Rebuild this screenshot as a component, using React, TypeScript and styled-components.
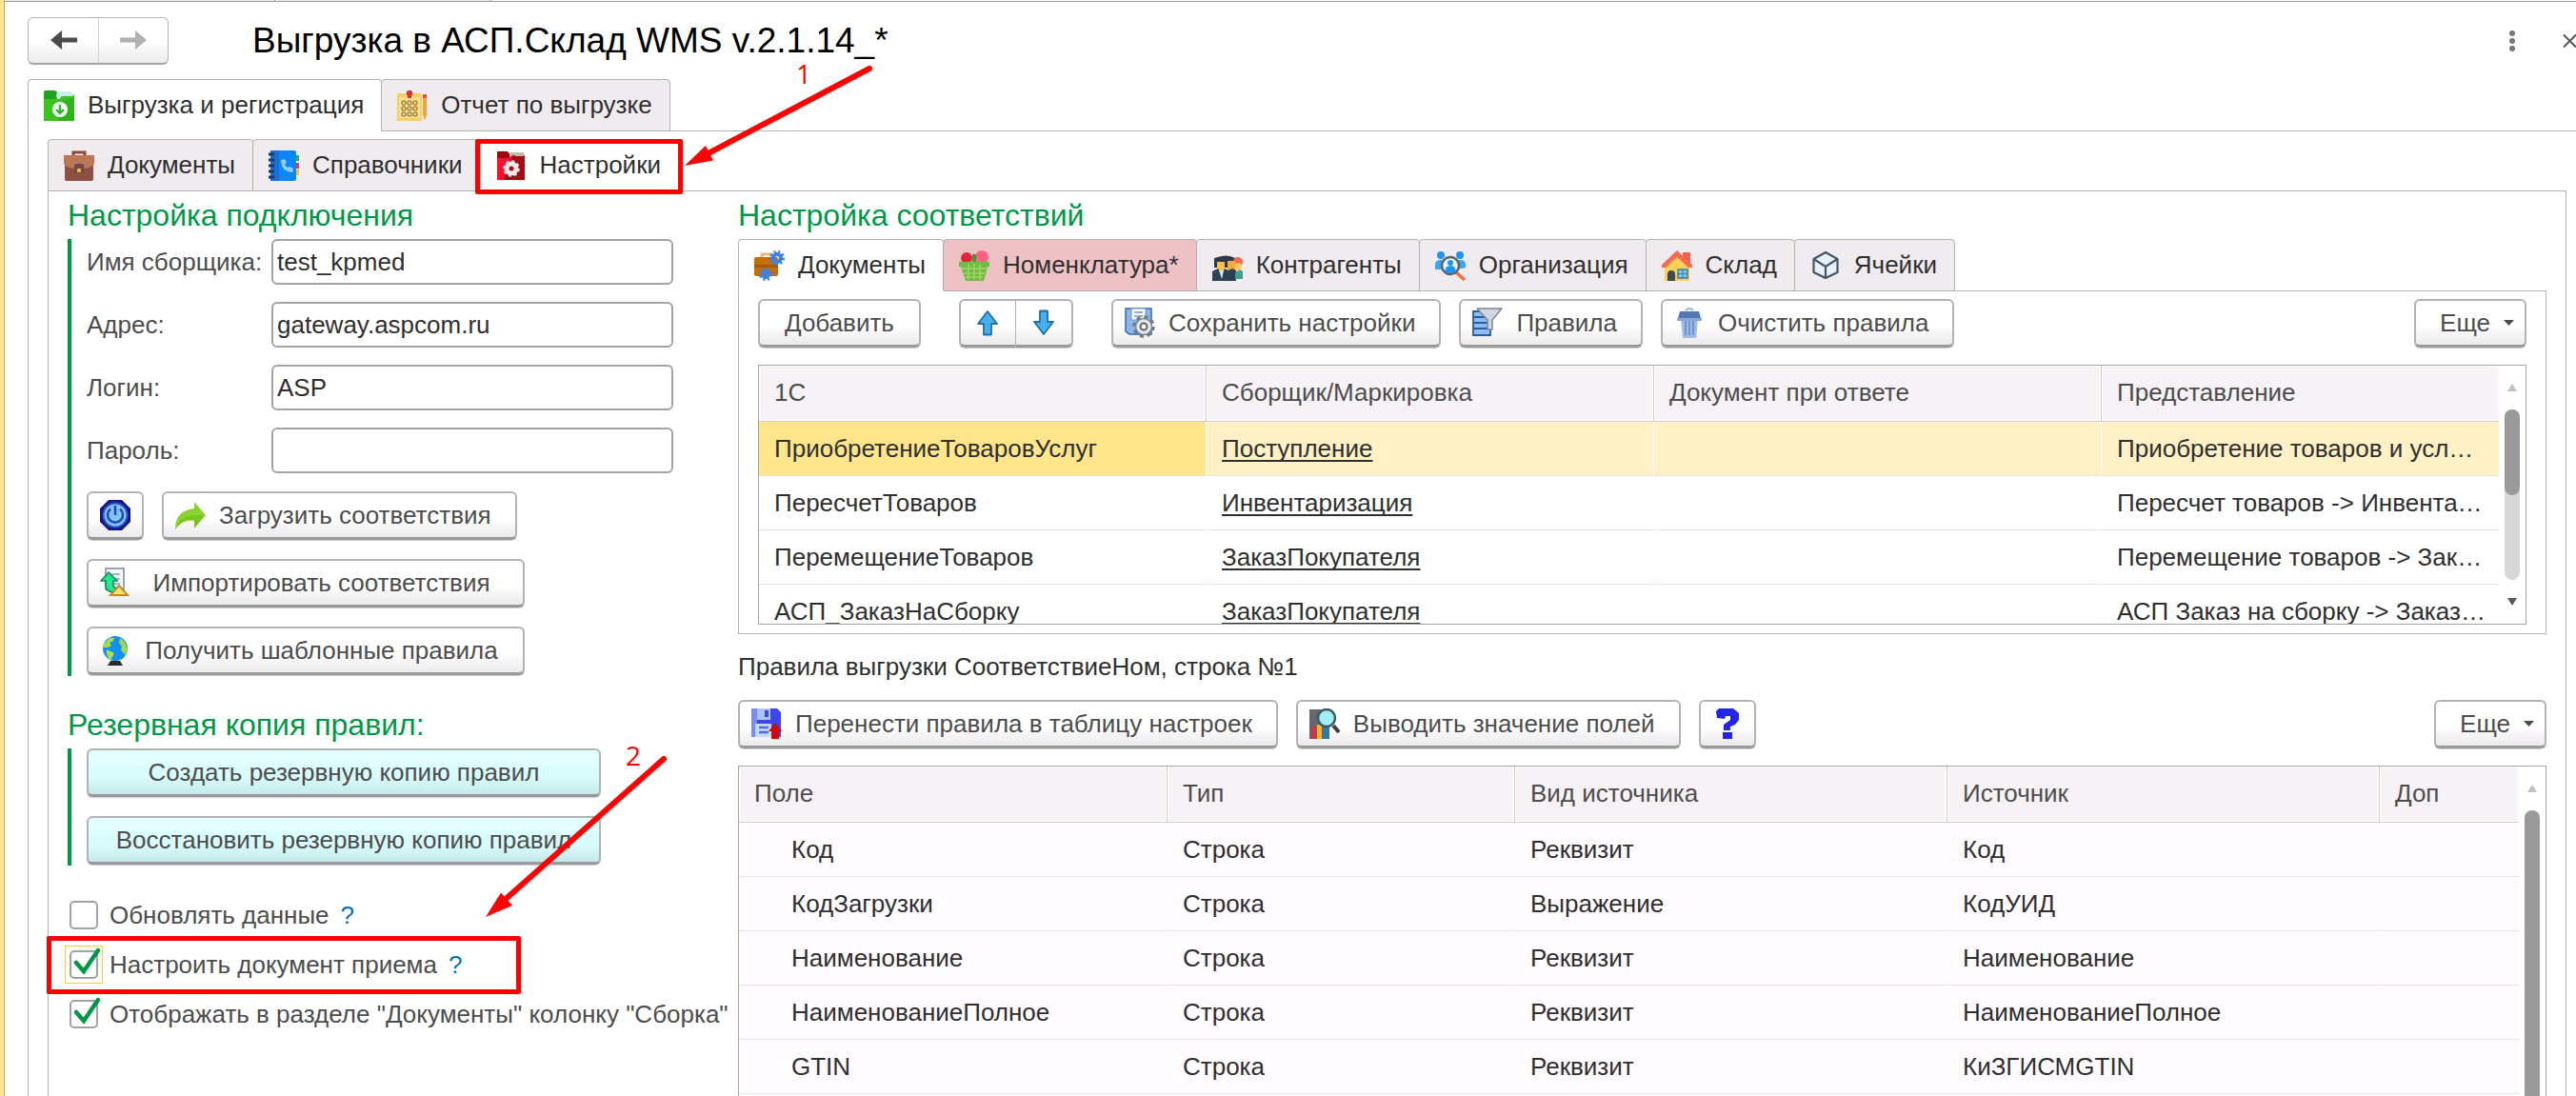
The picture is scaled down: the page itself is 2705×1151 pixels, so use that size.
import React from "react";
import styled, { createGlobalStyle, css } from "styled-components";

const GlobalStyle = createGlobalStyle`
  *, *::before, *::after { box-sizing: border-box; }
  body {
    margin: 0;
    background: #fff;
    overflow: hidden;
    font-family: "Liberation Sans", Arial, sans-serif;
    font-size: 26px;
    color: #2f2f2f;
  }
  button, input { font: inherit; }
`;

const line = "#b3b3b3";
const green = "#009846";

/* ---------- window ---------- */

const Window = styled.div`
  position: relative;
  display: flex;
  height: 100vh;
  overflow: hidden;
`;

const SideStripe = styled.div`
  flex: 0 0 5px;
  background: #ffe695;
  border-right: 1px solid #c4ad6c;
`;

const Workspace = styled.div`
  flex: 1;
  min-width: 0;
  display: flex;
  flex-direction: column;
`;

const OpenTabs = styled.div`
  display: flex;
  height: 2px;
  border-bottom: 1px solid #a09c9f;
`;

const OpenTab = styled.div<{ $width: number }>`
  width: ${(p) => p.$width}px;
  background: #f0ebee;
  border-right: 1px solid #a09c9f;
`;

const Header = styled.header`
  flex: none;
  display: flex;
  align-items: center;
  height: 81px;
  padding-left: 24px;
`;

const History = styled.div`
  display: flex;
  height: 50px;
  border: 1px solid ${line};
  border-bottom: 2px solid #a6a3a6;
  border-radius: 6px;
  background: linear-gradient(#fff 50%, #f6f4f6 75%, #ececec);
`;

const HistoryButton = styled.button`
  width: 73px;
  display: flex;
  align-items: center;
  justify-content: center;
  padding: 0;
  border: 0;
  background: none;
  color: #4d4d4d;
  & + & { border-left: 1px solid #d2d2d2; }
  &:disabled { color: #b0b0b0; }
`;

const Title = styled.h1`
  flex: 1;
  margin: 0 0 0 88px;
  font-size: 37px;
  font-weight: 400;
  color: #000;
  white-space: nowrap;
`;

const WindowButton = styled.button`
  display: flex;
  padding: 0;
  margin-left: 50px;
  border: 0;
  background: none;
  color: #555;
`;

/* ---------- tabs ---------- */

const TabList = styled.div`
  flex: none;
  display: flex;
`;

const Tab = styled.button<{ $active?: boolean; $tone?: string }>`
  position: relative;
  display: flex;
  align-items: center;
  gap: 14px;
  height: 55px;
  margin: 0 0 -1px;
  padding: 0 18px 0 16px;
  border: 1px solid ${line};
  border-radius: 4px 4px 0 0;
  background: ${(p) => p.$tone || "#f0ebee"};
  color: #2f2f2f;
  white-space: nowrap;
  & + & { margin-left: -1px; }
  ${(p) =>
    p.$active &&
    css`
      background: #fff;
      border-bottom-color: #fff;
      z-index: 1;
    `}
`;

const MainTabs = styled.div`
  flex: 1;
  min-height: 0;
  display: flex;
  flex-direction: column;
  padding-left: 24px;
`;

const MainPanel = styled.div`
  flex: 1;
  min-height: 0;
  display: flex;
  flex-direction: column;
  padding: 8px 10px 0 20px;
  border: 1px solid ${line};
  border-width: 1px 0 0 1px;
`;

const SettingsPanel = styled.div`
  flex: 1;
  min-height: 0;
  display: grid;
  grid-template-columns: 684px minmax(0, 1fr);
  grid-template-rows: minmax(0, 1fr);
  gap: 20px;
  padding: 0 20px;
  border: 1px solid ${line};
  border-bottom: 0;
`;

const MappingPanel = styled.div`
  flex: none;
  padding: 8px 20px 9px;
  border: 1px solid ${line};
`;

/* ---------- common parts ---------- */

const Column = styled.div`
  display: flex;
  flex-direction: column;
  min-width: 0;
  min-height: 0;
`;

const Heading = styled.h2<{ $spaced?: boolean }>`
  flex: none;
  margin: ${(p) => (p.$spaced ? "26px" : 0)} 0 0;
  font-size: 32px;
  line-height: 50px;
  font-weight: 400;
  color: ${green};
`;

const Group = styled.div`
  display: flex;
  flex-direction: column;
  align-items: flex-start;
  gap: 19px;
  padding-left: 16px;
  border-left: 4px solid ${green};
`;

const Fields = styled.div`
  display: grid;
  grid-template-columns: 194px 422px;
  row-gap: 18px;
  align-items: center;
`;

const FieldLabel = styled.label`
  color: #4d4d4d;
  white-space: nowrap;
`;

const TextField = styled.input`
  height: 48px;
  width: 100%;
  padding: 0 4px;
  border: 2px solid #a3a3a3;
  border-radius: 6px;
  background: #fff;
  color: #2f2f2f;
  outline: 0;
`;

const Row = styled.div`
  display: flex;
  gap: 19px;
`;

const Button = styled.button<{ $kind?: "icon" | "more"; $width?: number; $accent?: boolean }>`
  flex: none;
  display: flex;
  align-items: center;
  justify-content: center;
  gap: 14px;
  height: 51px;
  width: ${(p) => (p.$kind === "icon" ? "60px" : p.$width ? `${p.$width}px` : "auto")};
  padding: ${(p) => (p.$kind === "icon" ? "0" : p.$kind === "more" ? "0 11px 0 25px" : "0 26px")};
  border: 2px solid ${line};
  border-bottom: 3px solid #9b989b;
  border-radius: 6px;
  box-shadow: 0 1px 0 #d0ced0;
  background: ${(p) =>
    p.$accent
      ? "linear-gradient(#e3ffff 25%, #d9fdff 40%, #d9fbfc 60%, #c6eaea)"
      : "linear-gradient(#fff 60%, #f7f4f7 75%, #ebebeb)"};
  color: #4d4d4d;
  white-space: nowrap;
  margin-bottom: 1px;
`;

const IconTextButton = styled(Button)`
  padding: 0 25px 0 12px;
`;

const ButtonText = styled.span`
  flex: 1;
  text-align: center;
`;

const Toolbar = styled.div`
  flex: none;
  display: flex;
  gap: 19px;
  margin-bottom: 17px;
`;

const Spacer = styled.div`
  flex: 1;
`;

const MoveButtons = styled.div`
  display: flex;
  margin: 0 21px;
  button + button { border-left: 0; border-radius: 0 6px 6px 0; }
  button:first-child { border-radius: 6px 0 0 6px; border-right-width: 1px; }
`;

const RulesCaption = styled.div`
  flex: none;
  line-height: 69px;
`;

/* ---------- check boxes ---------- */

const Checks = styled.div`
  display: flex;
  flex-direction: column;
  align-items: flex-start;
  margin-top: 26px;
`;

const CheckRow = styled.div`
  position: relative;
  display: flex;
  align-items: center;
  gap: 12px;
  height: 52px;
  padding-left: 2px;
  color: #4d4d4d;
  white-space: nowrap;
`;

const CheckBox = styled.span<{ $focused?: boolean }>`
  position: relative;
  display: flex;
  outline: ${(p) => (p.$focused ? "1px solid #ffd02b" : "none")};
  outline-offset: 4px;
  input {
    appearance: none;
    width: 30px;
    height: 30px;
    margin: 0;
    border: 2px solid #a3a3a3;
    border-radius: 5px;
    background: #fff;
    outline: 0;
  }
  svg {
    position: absolute;
    left: 0;
    top: -4px;
    pointer-events: none;
    display: none;
  }
  input:checked + svg { display: block; }
`;

const Hint = styled.a`
  color: #0070c0;
  text-decoration: none;
`;

/* ---------- tables ---------- */

const TableFrame = styled.div<{ $fill?: boolean }>`
  display: flex;
  overflow: hidden;
  border: 1px solid #a3a3a3;
  ${(p) =>
    p.$fill
      ? css`
          flex: 1;
          min-height: 0;
          border-bottom: 0;
        `
      : css`
          height: 273px;
        `}
`;

const TableBody = styled.div<{ $tint?: boolean }>`
  flex: 1;
  min-width: 0;
  overflow: hidden;
  background: ${(p) => (p.$tint ? "#fffbff" : "#fff")};
`;

const DataTable = styled.table`
  width: 100%;
  table-layout: fixed;
  border-collapse: separate;
  border-spacing: 0;
`;

const HeadCell = styled.th`
  height: 59px;
  padding: 0 16px 2px;
  border: 1px solid #cfcccf;
  border-width: 0 1px 1px 0;
  box-shadow: inset 0 0 0 1px #fff;
  background: #f6f2f6;
  color: #4d4d4d;
  font-weight: 400;
  text-align: left;
  white-space: nowrap;
  overflow: hidden;
  &:last-child { border-right-color: #f6f2f6; }
`;

const Cell = styled.td<{ $bg?: string; $indent?: boolean }>`
  height: 57px;
  padding: 0 0 0 ${(p) => (p.$indent ? 55 : 16)}px;
  border-bottom: 1px solid #e6e4e6;
  border-right: 1px solid ${(p) => (p.$bg ? "#fff" : "transparent")};
  background: ${(p) => p.$bg || "transparent"};
  background-clip: padding-box;
  white-space: nowrap;
  overflow: hidden;
  text-overflow: ellipsis;
  &:last-child { border-right: 0; }
`;

const CellLink = styled.a`
  color: inherit;
  text-decoration: underline;
  text-decoration-thickness: 2px;
  text-underline-offset: 3px;
  text-decoration-skip-ink: none;
`;

const ScrollColumn = styled.div`
  flex: 0 0 28px;
  display: flex;
  flex-direction: column;
  align-items: center;
`;

const ScrollArrow = styled.div<{ $down?: boolean }>`
  flex: 0 0 46px;
  display: flex;
  align-items: center;
  &::before {
    content: "";
    border: 5px solid transparent;
    ${(p) =>
      p.$down
        ? "border-top: 8px solid #595959; border-bottom: 0;"
        : "border-bottom: 8px solid #c2c0c2; border-top: 0;"}
  }
`;

const ScrollTrack = styled.div`
  flex: 1;
  width: 16px;
  border-radius: 8px;
  background: #d8d8d8;
`;

const ScrollThumb = styled.div<{ $full?: boolean }>`
  height: ${(p) => (p.$full ? "100%" : "50%")};
  border-radius: ${(p) => (p.$full ? "8px 8px 0 0" : "8px")};
  background: #9c999c;
`;

/* ---------- annotations ---------- */

const Frame = styled.span<{ $for: "tab" | "check" }>`
  position: absolute;
  border: 5px solid #f00;
  border-radius: 2px;
  pointer-events: none;
  ${(p) =>
    p.$for === "tab"
      ? "inset: -1px -5px -4px -6px;"
      : "top: -4px; left: -22px; height: 61px; width: 498px;"}
`;

const ArrowLayer = styled.svg`
  position: absolute;
  left: 0;
  top: 0;
  pointer-events: none;
`;

const StepNumber = styled.span<{ $x: number; $y: number }>`
  position: absolute;
  left: ${(p) => p.$x}px;
  top: ${(p) => p.$y}px;
  font-family: "Open Sans", sans-serif;
  font-size: 28px;
  line-height: 32px;
  color: #f00;
`;

/* ---------- icons ---------- */

const IconSvg = styled.svg`
  flex: none;
`;

const Icon = ({ children }: { children: React.ReactNode }) => (
  <IconSvg width="32" height="32" viewBox="0 0 32 32" aria-hidden="true">
    {children}
  </IconSvg>
);

const FolderDownIcon = () => (
  <Icon>
    <path d="M0 2q0-2 2-2h10l4 4h14q2 0 2 2v6H0z" fill="#1fa51f" />
    <path d="M13 4l2-3h13l3 4v5H14z" fill="#c9f2e6" />
    <path d="M0 9h16l3-3h13v26H0z" fill="#3cc41e" />
    <path d="M18 12L32 7v25H14z" fill="#2fb31a" />
    <circle cx="17" cy="20" r="8" fill="#fff" />
    <path d="M17 15v8m-4-3 4 4 4-4" stroke="#2fb52b" strokeWidth="2.4" fill="none" />
  </Icon>
);

const ReportIcon = () => (
  <Icon>
    <rect x="0" y="3" width="26" height="29" fill="#f8cf63" />
    <rect x="2" y="7" width="22" height="22" fill="#fbdf8d" />
    <path d="M13 0v8M10 3h6" stroke="#d9333a" strokeWidth="4" />
    <g fill="none" stroke="#a78a4d" strokeWidth="1.600">
      <circle cx="7" cy="13" r="2" />
      <circle cx="13" cy="13" r="2" />
      <circle cx="19" cy="13" r="2" />
      <circle cx="7" cy="19" r="2" />
      <circle cx="13" cy="19" r="2" />
      <circle cx="19" cy="19" r="2" />
      <circle cx="7" cy="25" r="2" />
      <circle cx="13" cy="25" r="2" />
      <circle cx="19" cy="25" r="2" />
    </g>
    <path d="M27 8h4v18l-2 5-2-5z" fill="#e9a43b" />
    <path d="M27 4h4v4h-4z" fill="#e2504d" />
  </Icon>
);

const BriefcaseIcon = () => (
  <Icon>
    <path d="M10 7V2h12v5" fill="none" stroke="#8b4b3a" strokeWidth="3" />
    <rect x="1" y="6" width="30" height="26" rx="2" fill="#8d5042" />
    <path d="M0 5h32v9q-4 5-12 5h-8Q4 19 0 14z" fill="#bd7656" />
    <rect x="11" y="14" width="10" height="10" rx="2" fill="#6d4b4a" />
    <rect x="14" y="19" width="4" height="4" fill="#f2b633" />
  </Icon>
);

const PhoneBookIcon = () => (
  <Icon>
    <rect x="2" y="0" width="27" height="32" rx="2" fill="#0a86ff" />
    <path d="M2 0h9v32H2z" fill="#1a6fd0" />
    <path d="M0 4h6M0 10h6M0 16h6M0 22h6M0 28h6" stroke="#123c6d" strokeWidth="3" />
    <path d="M29 5h3v6h-3z" fill="#2bb24c" />
    <path d="M29 13h3v6h-3z" fill="#e53935" />
    <path d="M29 20h3v6h-3z" fill="#f9c22e" />
    <path d="M13 10q0 12 12 13l1-4-4-2-2 1q-3-2-3-4l2-1-2-4z" fill="#8fd0ff" />
  </Icon>
);

const FolderGearIcon = () => (
  <Icon>
    <path d="M1 1h11l3 4h15v26H1z" fill="#9c0a10" />
    <path d="M14 2h15v5H14z" fill="#c5b9ae" />
    <path d="M1 8h12l4-3h3L9 31H1z" fill="#ff0e2c" />
    <path d="M17 6h13v25H8z" fill="#a50d14" />
    <circle cx="16" cy="19" r="5" fill="none" stroke="#f4e9ea" strokeWidth="5" />
    <circle cx="16" cy="19" r="7.500" fill="none" stroke="#f4e9ea" strokeWidth="2.500" strokeDasharray="3 2.890" />
  </Icon>
);

const PowerIcon = () => (
  <Icon>
    <path d="M9 0h14l9 9v14l-9 9H9l-9-9V9z" fill="#16168a" />
    <circle cx="16" cy="16" r="12.500" fill="#7fc6f0" stroke="#2a55c4" strokeWidth="2" />
    <path d="M11 9.500a8 8 0 1 0 10 0M16 6v10" fill="none" stroke="#2545b8" strokeWidth="2.500" />
  </Icon>
);

const ShareIcon = () => (
  <Icon>
    <path d="M20 2l12 14-12 14v-8Q8 20 0 31 0 11 20 9z" fill="#8cd22f" />
    <path d="M31 16L20 29v-8Q9 18 1 29q4-12 19-13z" fill="#79c425" />
  </Icon>
);

const ImportIcon = () => (
  <Icon>
    <path d="M6 1h19v22H6z" fill="#f5f7fb" stroke="#97a3b8" strokeWidth="2" />
    <path d="M12 7h9m-9 5h9m-9 5h9" stroke="#a9b4c6" strokeWidth="2" />
    <path d="M9 5l9 9h-4v5q1 3 5 3v4Q6 27 6 19v-5H1z" fill="#22e690" stroke="#0d8a50" strokeWidth="1.500" />
    <path d="M20 19l9 10H11z" fill="#ffe27a" stroke="#c58b1d" strokeWidth="2" />
  </Icon>
);

const GlobeIcon = () => (
  <Icon>
    <circle cx="16" cy="14" r="13" fill="#1490ee" />
    <path d="M4 9l6-6 5 0-1 3-4 2 2 3-4 2-5 0z" fill="#a5dc4c" />
    <path d="M7 15l8 4-4 7q-5-4-4-11z" fill="#b2e04a" />
    <path d="M21 3l5 4 3 7-2 7-5-5 1-4-3-4z" fill="#a0d84f" />
    <path d="M11 27h10l3 5H8z" fill="#2a2a2a" />
  </Icon>
);

const Gear = ({ x, y, r, color }: { x: number; y: number; r: number; color: string }) => (
  <>
    <circle cx={x} cy={y} r={r - 2.5} fill="none" stroke={color} strokeWidth="4" />
    <circle cx={x} cy={y} r={r} fill="none" stroke={color} strokeWidth="3" strokeDasharray="2.200 2.200" />
  </>
);

const CaseGearsIcon = () => (
  <Icon>
    <path d="M8 8V4h10v4" fill="none" stroke="#e2bb80" strokeWidth="3" />
    <rect x="0" y="7" width="25" height="20" rx="2" fill="#c46e06" />
    <path d="M0 15h25v3H0z" fill="#a85b00" />
    <Gear x={24} y={8} r={6.5} color="#3b82e6" />
    <Gear x={12} y={25} r={5.5} color="#3b82e6" />
  </Icon>
);

const BasketIcon = () => (
  <Icon>
    <circle cx="8" cy="8" r="6" fill="#dc2a3a" />
    <circle cx="24" cy="7" r="7" fill="#ff6282" />
    <path d="M14 4h4v10h-4z" fill="#3e9a32" />
    <path d="M0 12h32v5h-2l-4 15H7L2 17H0z" fill="#74b943" />
    <path d="M3 19h26M5 24h22M7 28h18M10 14v17m6-17v17m6-17v17" stroke="#9ed66b" strokeWidth="1.500" />
  </Icon>
);

const PartnersIcon = () => (
  <Icon>
    <path d="M2 8q14-5 22 0v10H2z" fill="#2b3a4a" />
    <circle cx="27" cy="12" r="5" fill="#ef6a4e" />
    <circle cx="27" cy="17" r="4" fill="#ffc86b" />
    <path d="M5 12h8v10q-4 4-8 0z" fill="#ffc04d" />
    <path d="M16 11h8v10q-4 4-8 0z" fill="#f5ab3c" />
    <path d="M0 22l6-3 4 6 3-6 4 2 4-2 4 2v11H0z" fill="#2d4254" />
    <path d="M24 24q4-6 8-2v8h-8z" fill="#3fa08c" />
    <path d="M7 21l3 9 2-9z" fill="#cfe6f5" />
  </Icon>
);

const OrganisationIcon = () => (
  <Icon>
    <circle cx="6" cy="5" r="4" fill="#1e95f5" />
    <circle cx="26" cy="5" r="4" fill="#1e95f5" />
    <path d="M0 20v-5q0-5 6-5 4 0 6 3l-3 7zM32 18v-3q0-5-6-5-4 0-6 3l3 7z" fill="#3ba4f7" />
    <path d="M22 23l9 8" stroke="#f5713c" strokeWidth="3.500" />
    <circle cx="16" cy="16" r="9" fill="#e9f2fa" stroke="#5d6368" strokeWidth="2.500" />
    <circle cx="16" cy="13" r="3" fill="#1e95f5" />
    <path d="M10 22q1-6 6-6t6 6q-6 4-12 0z" fill="#1e95f5" />
  </Icon>
);

const HouseIcon = () => (
  <Icon>
    <path d="M22 2h8v14h-8z" fill="#f2604d" />
    <path d="M3 14L16 4l13 10v18H3z" fill="#ffcf57" />
    <path d="M16 0l16 15v3h-4L16 7 4 18H0v-3z" fill="#fb6a52" />
    <path d="M6 32V25q0-4 4-4t4 4v7z" fill="#3d4a55" />
    <rect x="17" y="20" width="10" height="9" fill="#7cc6ee" stroke="#3f7da0" strokeWidth="1.500" />
    <path d="M22 20v9m-5-4.500h10" stroke="#3f7da0" />
  </Icon>
);

const CubeIcon = () => (
  <Icon>
    <path d="M16 2l12.500 7v14L16 29 3.500 23V9z" fill="#e8f1fb" stroke="#44566a" strokeWidth="2.200" strokeLinejoin="round" />
    <path d="M3.500 9L16 17l12.500-8M16 17v12" fill="none" stroke="#44566a" strokeWidth="2.200" />
  </Icon>
);

const SaveSettingsIcon = () => (
  <Icon>
    <path d="M1 1h27v27H5l-4-3z" fill="#8db5ea" stroke="#3e6aa5" strokeWidth="1.500" />
    <path d="M7 1h15v12H7z" fill="#fff" stroke="#6b93c7" />
    <path d="M10 5h9m-9 4h9" stroke="#6b93c7" strokeWidth="1.500" />
    <circle cx="20" cy="20" r="10" fill="none" stroke="#6f7780" strokeWidth="3.500" strokeDasharray="4 3.850" />
    <circle cx="20" cy="20" r="8.500" fill="#e5e7ea" stroke="#7b838c" strokeWidth="1.500" />
    <circle cx="20" cy="20" r="3.500" fill="#fff" stroke="#5d666f" strokeWidth="2" />
  </Icon>
);

const FilterIcon = () => (
  <Icon>
    <path d="M1 4h18v6H1zM1 10h17v6H1zM1 16h19v6H1zM1 22h18v7H1z" fill="#8cbcf2" stroke="#2b5c93" strokeWidth="1.800" />
    <path d="M5 1h26l-10 12v10h-5V13z" fill="#d2d6de" stroke="#7d8795" strokeWidth="1.500" strokeLinejoin="round" />
  </Icon>
);

const TrashIcon = () => (
  <Icon>
    <path d="M12 3q4-4 8 0" fill="none" stroke="#9db6de" strokeWidth="2" />
    <path d="M6 4h20l2 7H4z" fill="#5378b8" />
    <path d="M7 12h18l-2 20H9z" fill="#9dbbe6" />
    <path d="M12 14v15m4-15v15m4-15v15" stroke="#6f94cc" strokeWidth="2" />
    <path d="M3 11h26v3H3z" fill="#8aa6d3" />
  </Icon>
);

const BlueArrowIcon = ({ down }: { down?: boolean }) => (
  <svg width="24" height="28" viewBox="0 0 24 28" aria-hidden="true">
    <path
      d={down ? "M8 1.500h8V13h6L12 26 2 13h6z" : "M8 26.500h8V15h6L12 2 2 15h6z"}
      fill="#45b0f0"
      stroke="#256f9f"
      strokeWidth="1.800"
      strokeLinejoin="round"
    />
  </svg>
);

const DisketteIcon = () => (
  <Icon>
    <path d="M0 0h27l4 4v26H0z" fill="#3c45ef" />
    <path d="M0 0h6v30H0z" fill="#7a8bff" />
    <path d="M6 0h14v12H6z" fill="#a9c6ff" />
    <path d="M14 2h4v7h-4z" fill="#3c45ef" />
    <path d="M4 16h17v14H4z" fill="#c5dcff" />
    <path d="M8 20h10m-10 5h10" stroke="#4c6cf0" strokeWidth="2.500" />
    <path d="M25 15l7 9h-3v8h-8v-8h-3z" fill="#cc0b0b" />
  </Icon>
);

const InspectIcon = () => (
  <Icon>
    <path d="M0 1h14v31H0z" fill="#65676e" />
    <path d="M2 19h5v13H2z" fill="#d6304a" />
    <path d="M8 17h5v15H8z" fill="#f0b429" />
    <path d="M14 18h7v14h-7z" fill="#2d7bab" />
    <path d="M25 18l6 7" stroke="#3c3f44" strokeWidth="4" />
    <circle cx="18" cy="10" r="9" fill="#9ff0f5" stroke="#3d5a5e" strokeWidth="2.500" />
  </Icon>
);

const QuestionIcon = () => (
  <Icon>
    <path
      d="M4 3l3-3h15l6 5v7l-4 5-5 2v4h-7v-6l7-5v-4h-5l-1 3-8-1z"
      fill="#2225e6"
    />
    <path d="M11 25h10v7H11z" fill="#2225e6" />
  </Icon>
);

const HistoryArrow = ({ forward }: { forward?: boolean }) => (
  <svg width="30" height="22" viewBox="0 0 30 22" aria-hidden="true">
    <path
      d={forward ? "M1 8.500h16V1l12 10-12 10v-7.500H1z" : "M29 8.500H13V1L1 11l12 10v-7.500h16z"}
      fill="currentColor"
    />
  </svg>
);

const Caret = () => (
  <svg width="11" height="6" viewBox="0 0 11 6" aria-hidden="true">
    <path d="M0 0h11L5.500 6z" fill="#4d4d4d" />
  </svg>
);

/* ---------- data ---------- */

const fields = [
  { id: "collector", label: "Имя сборщика:", value: "test_kpmed", type: "text" },
  { id: "address", label: "Адрес:", value: "gateway.aspcom.ru", type: "text" },
  { id: "login", label: "Логин:", value: "ASP", type: "text" },
  { id: "password", label: "Пароль:", value: "", type: "password" },
];

const mappings = [
  ["ПриобретениеТоваровУслуг", "Поступление", "", "Приобретение товаров и усл…"],
  ["ПересчетТоваров", "Инвентаризация", "", "Пересчет товаров -> Инвента…"],
  ["ПеремещениеТоваров", "ЗаказПокупателя", "", "Перемещение товаров -> Зак…"],
  ["АСП_ЗаказНаСборку", "ЗаказПокупателя", "", "АСП Заказ на сборку -> Заказ…"],
];

const rules = [
  ["Код", "Строка", "Реквизит", "Код", ""],
  ["КодЗагрузки", "Строка", "Выражение", "КодУИД", ""],
  ["Наименование", "Строка", "Реквизит", "Наименование", ""],
  ["НаименованиеПолное", "Строка", "Реквизит", "НаименованиеПолное", ""],
  ["GTIN", "Строка", "Реквизит", "КиЗГИСМGTIN", ""],
];

const mappingTabs = [
  { label: "Документы", icon: <CaseGearsIcon />, active: true },
  { label: "Номенклатура*", icon: <BasketIcon />, tone: "#eec2c5" },
  { label: "Контрагенты", icon: <PartnersIcon /> },
  { label: "Организация", icon: <OrganisationIcon /> },
  { label: "Склад", icon: <HouseIcon /> },
  { label: "Ячейки", icon: <CubeIcon /> },
];

type OptionData = {
  id: string;
  label: string;
  checked: boolean;
  hint?: boolean;
  marked?: boolean;
};

const options: OptionData[] = [
  { id: "refresh", label: "Обновлять данные", hint: true, checked: false },
  { id: "receipt", label: "Настроить документ приема", hint: true, checked: true, marked: true },
  { id: "assembly", label: 'Отображать в разделе "Документы" колонку "Сборка"', checked: true },
];

const MoreButton = () => (
  <Button type="button" $kind="more">
    Еще
    <Caret />
  </Button>
);

const Option = ({ id, label, hint, checked, marked }: OptionData) => (
  <CheckRow>
    <CheckBox $focused={marked}>
      <input id={id} type="checkbox" defaultChecked={checked} />
      <svg width="34" height="34" viewBox="0 0 34 34" aria-hidden="true">
        <path d="M7 17l8 9L30 4" fill="none" stroke={green} strokeWidth="4.500" strokeLinecap="round" />
      </svg>
    </CheckBox>
    <label htmlFor={id}>{label}</label>
    {hint && <Hint href="#help">?</Hint>}
    {marked && <Frame $for="check" />}
  </CheckRow>
);

const ConnectionSettings = () => (
  <Column>
    <Heading>Настройка подключения</Heading>
    <Group>
      <Fields>
        {fields.map((f) => (
          <React.Fragment key={f.id}>
            <FieldLabel htmlFor={f.id}>{f.label}</FieldLabel>
            <TextField id={f.id} type={f.type} defaultValue={f.value} />
          </React.Fragment>
        ))}
      </Fields>
      <Row>
        <Button type="button" $kind="icon" aria-label="Подключить">
          <PowerIcon />
        </Button>
        <IconTextButton type="button">
          <ShareIcon />
          Загрузить соответствия
        </IconTextButton>
      </Row>
      <IconTextButton type="button" $width={460}>
        <ImportIcon />
        <ButtonText>Импортировать соответствия</ButtonText>
      </IconTextButton>
      <IconTextButton type="button" $width={460}>
        <GlobeIcon />
        <ButtonText>Получить шаблонные правила</ButtonText>
      </IconTextButton>
    </Group>

    <Heading $spaced>Резервная копия правил:</Heading>
    <Group>
      <Button type="button" $width={540} $accent>
        Создать резервную копию правил
      </Button>
      <Button type="button" $width={540} $accent>
        Восстановить резервную копию правил
      </Button>
    </Group>

    <Checks>
      {options.map((o) => (
        <Option key={o.id} {...o} />
      ))}
    </Checks>
  </Column>
);

const MappingSettings = () => (
  <Column>
    <Heading>Настройка соответствий</Heading>
    <TabList role="tablist">
      {mappingTabs.map((t) => (
        <Tab key={t.label} type="button" role="tab" aria-selected={!!t.active} $active={t.active} $tone={t.tone}>
          {t.icon}
          {t.label}
        </Tab>
      ))}
    </TabList>
    <MappingPanel>
      <Toolbar>
        <Button type="button">Добавить</Button>
        <MoveButtons>
          <Button type="button" $kind="icon" aria-label="Вверх">
            <BlueArrowIcon />
          </Button>
          <Button type="button" $kind="icon" aria-label="Вниз">
            <BlueArrowIcon down />
          </Button>
        </MoveButtons>
        <IconTextButton type="button">
          <SaveSettingsIcon />
          Сохранить настройки
        </IconTextButton>
        <IconTextButton type="button">
          <FilterIcon />
          Правила
        </IconTextButton>
        <IconTextButton type="button">
          <TrashIcon />
          Очистить правила
        </IconTextButton>
        <Spacer />
        <MoreButton />
      </Toolbar>
      <TableFrame>
        <TableBody>
          <DataTable>
            <colgroup>
              <col width="470" />
              <col width="470" />
              <col width="470" />
              <col />
            </colgroup>
            <thead>
              <tr>
                <HeadCell>1С</HeadCell>
                <HeadCell>Сборщик/Маркировка</HeadCell>
                <HeadCell>Документ при ответе</HeadCell>
                <HeadCell>Представление</HeadCell>
              </tr>
            </thead>
            <tbody>
              {mappings.map((row, r) => (
                <tr key={row[0]}>
                  {row.map((text, c) => (
                    <Cell key={c} $bg={r === 0 ? (c === 0 ? "#ffe68c" : "#fff0c5") : undefined}>
                      {c === 1 ? <CellLink href="#mapping">{text}</CellLink> : text}
                    </Cell>
                  ))}
                </tr>
              ))}
            </tbody>
          </DataTable>
        </TableBody>
        <ScrollColumn>
          <ScrollArrow />
          <ScrollTrack>
            <ScrollThumb />
          </ScrollTrack>
          <ScrollArrow $down />
        </ScrollColumn>
      </TableFrame>
    </MappingPanel>

    <RulesCaption>Правила выгрузки СоответствиеНом, строка №1</RulesCaption>
    <Toolbar>
      <IconTextButton type="button">
        <DisketteIcon />
        Перенести правила в таблицу настроек
      </IconTextButton>
      <IconTextButton type="button">
        <InspectIcon />
        Выводить значение полей
      </IconTextButton>
      <Button type="button" $kind="icon" aria-label="Справка">
        <QuestionIcon />
      </Button>
      <Spacer />
      <MoreButton />
    </Toolbar>
    <TableFrame $fill>
      <TableBody $tint>
        <DataTable>
          <colgroup>
            <col width="450" />
            <col width="365" />
            <col width="454" />
            <col width="454" />
            <col />
          </colgroup>
          <thead>
            <tr>
              <HeadCell>Поле</HeadCell>
              <HeadCell>Тип</HeadCell>
              <HeadCell>Вид источника</HeadCell>
              <HeadCell>Источник</HeadCell>
              <HeadCell>Доп</HeadCell>
            </tr>
          </thead>
          <tbody>
            {rules.map((row) => (
              <tr key={row[0]}>
                {row.map((text, c) => (
                  <Cell key={c} $indent={c === 0}>
                    {text}
                  </Cell>
                ))}
              </tr>
            ))}
          </tbody>
        </DataTable>
      </TableBody>
      <ScrollColumn>
        <ScrollArrow />
        <ScrollTrack>
          <ScrollThumb $full />
        </ScrollTrack>
      </ScrollColumn>
    </TableFrame>
  </Column>
);

export default function App() {
  return (
    <>
      <GlobalStyle />
      <Window>
        <SideStripe />
        <Workspace>
          <OpenTabs>
            <OpenTab $width={284} />
            <OpenTab $width={227} />
          </OpenTabs>
          <Header>
            <History>
              <HistoryButton type="button" aria-label="Назад">
                <HistoryArrow />
              </HistoryButton>
              <HistoryButton type="button" aria-label="Вперед" disabled>
                <HistoryArrow forward />
              </HistoryButton>
            </History>
            <Title>Выгрузка в АСП.Склад WMS v.2.1.14_*</Title>
            <WindowButton type="button" aria-label="Меню">
              <svg width="6" height="24" viewBox="0 0 6 24">
                <g fill="#777">
                  <circle cx="3" cy="4" r="3" />
                  <circle cx="3" cy="12" r="3" />
                  <circle cx="3" cy="20" r="3" />
                </g>
              </svg>
            </WindowButton>
            <WindowButton type="button" aria-label="Закрыть">
              <svg width="14" height="16" viewBox="0 0 14 16">
                <path d="M1 1.500l13 13m0-13l-13 13" stroke="#555" strokeWidth="2" />
              </svg>
            </WindowButton>
          </Header>

          <MainTabs>
            <TabList role="tablist">
              <Tab type="button" role="tab" aria-selected $active>
                <FolderDownIcon />
                Выгрузка и регистрация
              </Tab>
              <Tab type="button" role="tab" aria-selected={false}>
                <ReportIcon />
                Отчет по выгрузке
              </Tab>
            </TabList>
            <MainPanel>
              <TabList role="tablist">
                <Tab type="button" role="tab" aria-selected={false}>
                  <BriefcaseIcon />
                  Документы
                </Tab>
                <Tab type="button" role="tab" aria-selected={false}>
                  <PhoneBookIcon />
                  Справочники
                </Tab>
                <Tab type="button" role="tab" aria-selected $active>
                  <FolderGearIcon />
                  Настройки
                  <Frame $for="tab" />
                </Tab>
              </TabList>
              <SettingsPanel>
                <ConnectionSettings />
                <MappingSettings />
              </SettingsPanel>
            </MainPanel>
          </MainTabs>
        </Workspace>

        <ArrowLayer width="960" height="980" viewBox="0 0 960 980" aria-hidden="true">
          <g stroke="#f00" strokeWidth="6" strokeLinecap="round" fill="#f00">
            <path d="M913 72L742 162" />
            <path d="M697 797L530 945" />
          </g>
          <path d="M719 174l22-21 8 15.500zM510 963l16-25.500 12 13.500z" fill="#f00" />
        </ArrowLayer>
        <StepNumber $x={836} $y={61}>1</StepNumber>
        <StepNumber $x={657} $y={777}>2</StepNumber>
      </Window>
    </>
  );
}
